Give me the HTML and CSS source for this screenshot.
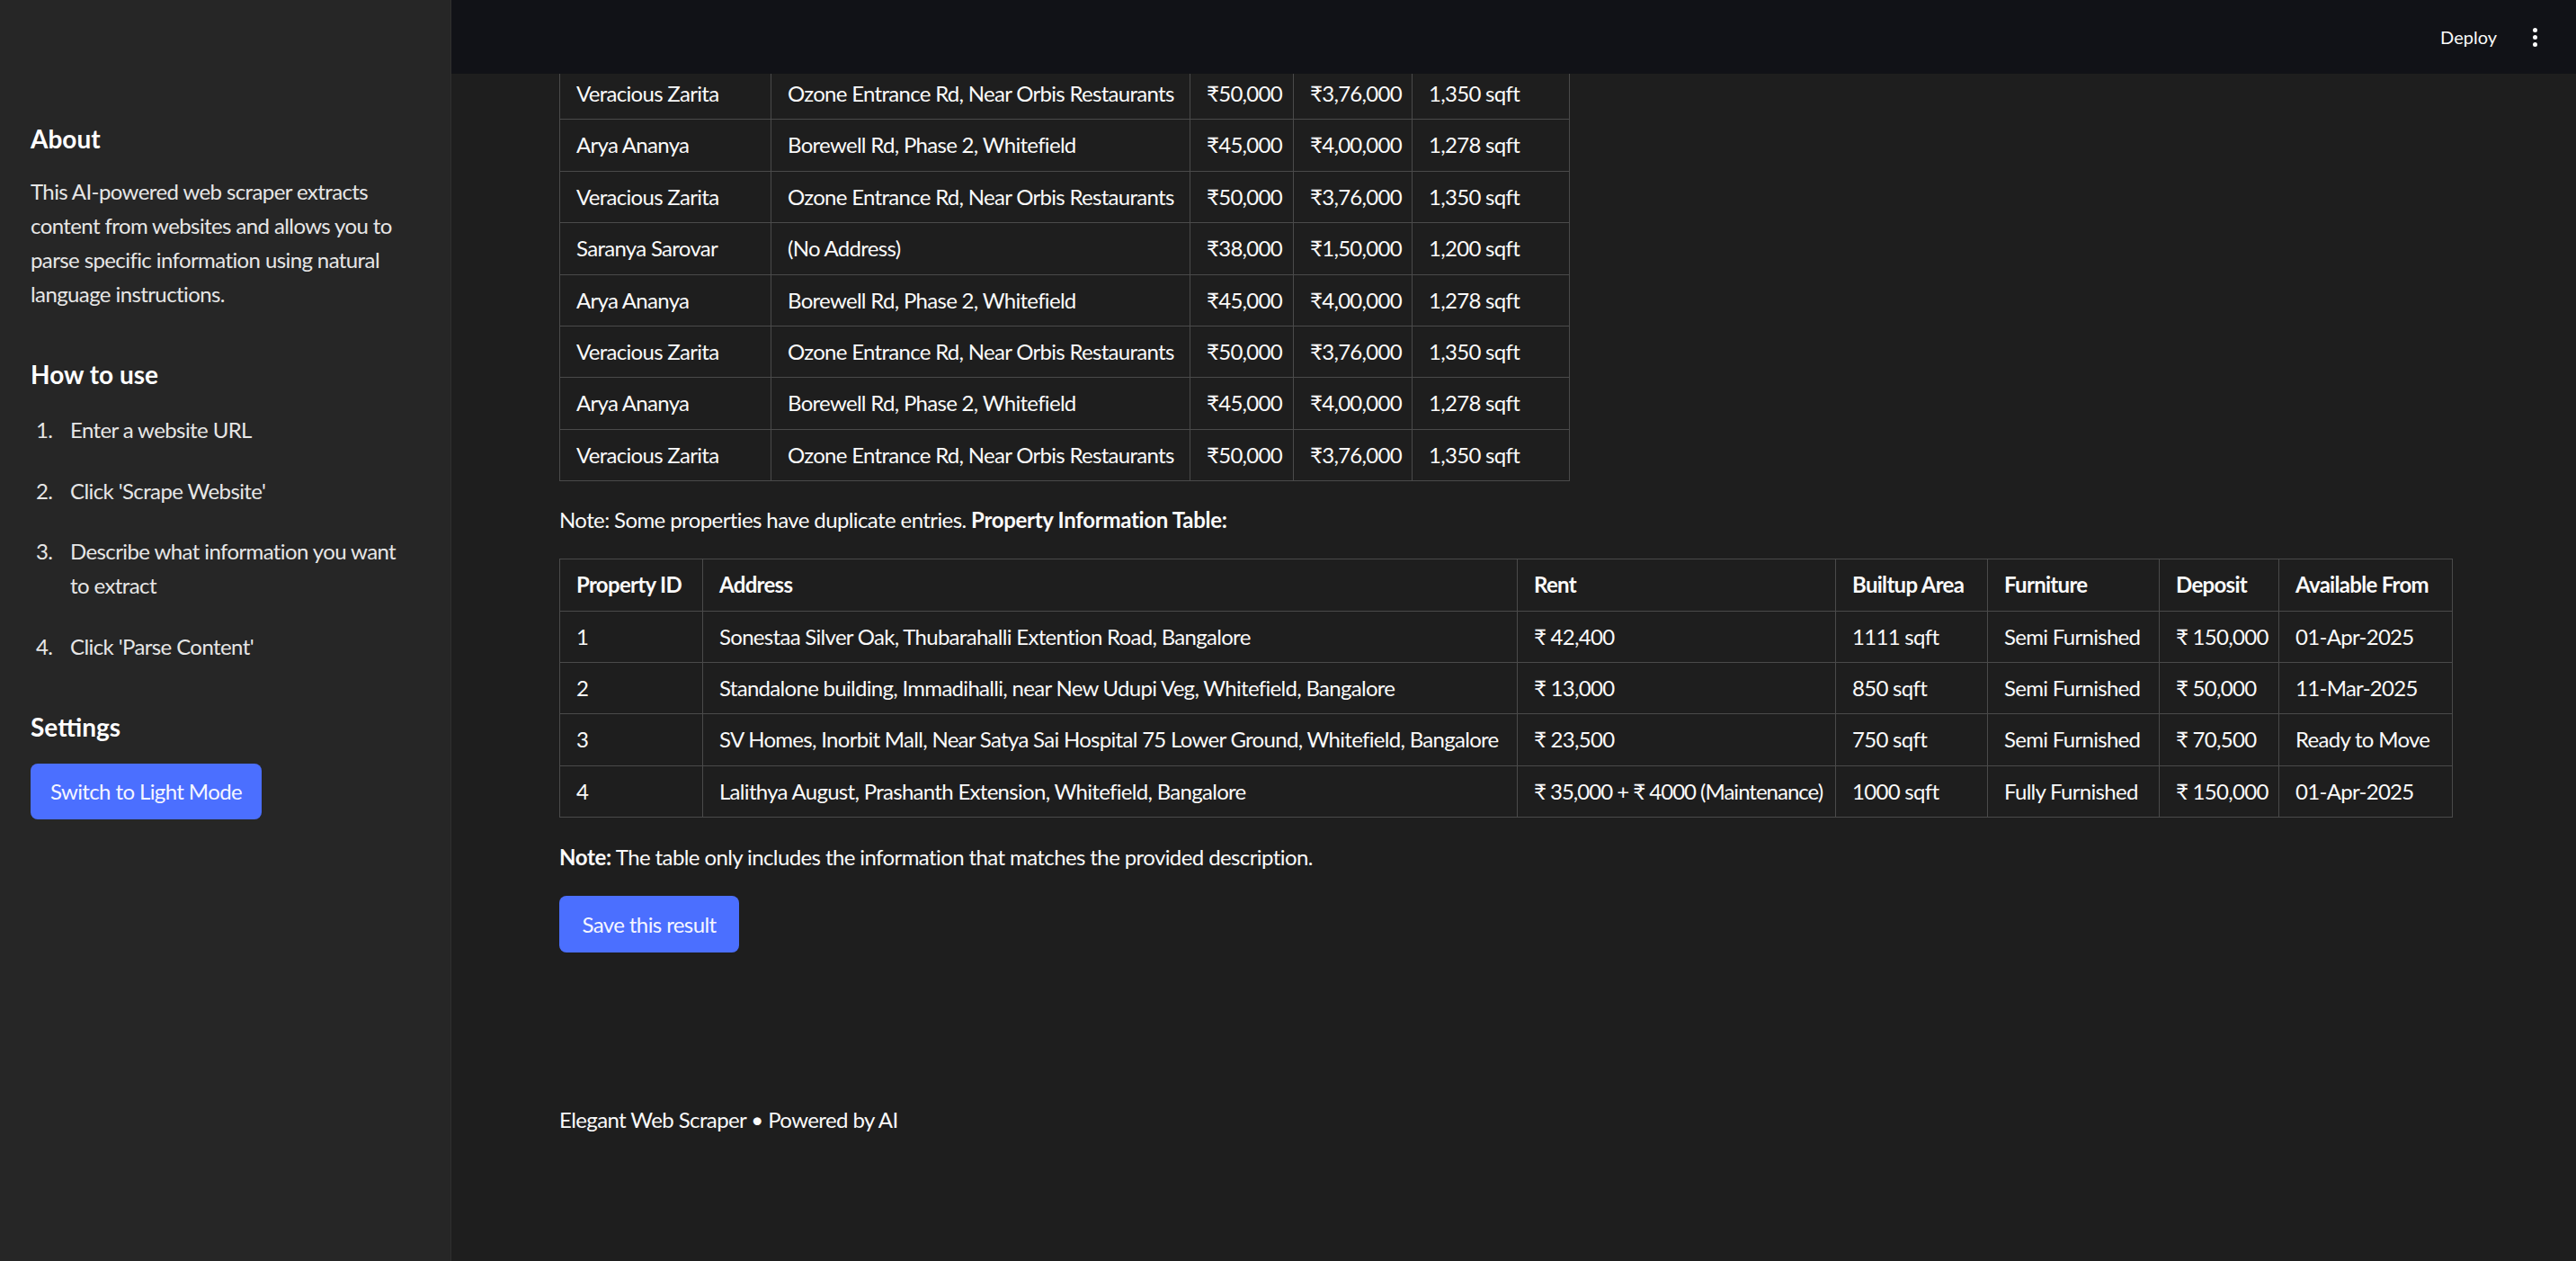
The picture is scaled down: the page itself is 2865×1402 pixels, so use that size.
FILE: index.html
```html
<!DOCTYPE html>
<html lang="en">
<head>
<meta charset="utf-8">
<title>Elegant Web Scraper</title>
<link rel="stylesheet" href="styles.css">
</head>
<body>
<div class="app">
  <aside class="sidebar">
    <h3 class="side-title">About</h3>
    <p class="side-text">This AI-powered web scraper extracts content from websites and allows you to parse specific information using natural language instructions.</p>
    <h3 class="side-title side-title-gap">How to use</h3>
    <ol class="steps">
      <li>Enter a website URL</li>
      <li>Click 'Scrape Website'</li>
      <li>Describe what information you want to extract</li>
      <li>Click 'Parse Content'</li>
    </ol>
    <h3 class="side-title side-title-gap">Settings</h3>
    <button class="btn side-btn">Switch to Light Mode</button>
  </aside>
  <main class="main">
    <header class="topbar">
      <span class="deploy">Deploy</span>
      <span class="kebab"><i></i><i></i><i></i></span>
    </header>
    <div class="content">
      <table class="grid grid-a">
        <colgroup>
          <col style="width:235px"><col style="width:466px"><col style="width:115px"><col style="width:132px"><col style="width:175px">
        </colgroup>
        <tbody>
          <tr><td>Veracious Zarita</td><td>Ozone Entrance Rd, Near Orbis Restaurants</td><td>₹50,000</td><td>₹3,76,000</td><td>1,350 sqft</td></tr>
          <tr><td>Arya Ananya</td><td>Borewell Rd, Phase 2, Whitefield</td><td>₹45,000</td><td>₹4,00,000</td><td>1,278 sqft</td></tr>
          <tr><td>Veracious Zarita</td><td>Ozone Entrance Rd, Near Orbis Restaurants</td><td>₹50,000</td><td>₹3,76,000</td><td>1,350 sqft</td></tr>
          <tr><td>Saranya Sarovar</td><td>(No Address)</td><td>₹38,000</td><td>₹1,50,000</td><td>1,200 sqft</td></tr>
          <tr><td>Arya Ananya</td><td>Borewell Rd, Phase 2, Whitefield</td><td>₹45,000</td><td>₹4,00,000</td><td>1,278 sqft</td></tr>
          <tr><td>Veracious Zarita</td><td>Ozone Entrance Rd, Near Orbis Restaurants</td><td>₹50,000</td><td>₹3,76,000</td><td>1,350 sqft</td></tr>
          <tr><td>Arya Ananya</td><td>Borewell Rd, Phase 2, Whitefield</td><td>₹45,000</td><td>₹4,00,000</td><td>1,278 sqft</td></tr>
          <tr><td>Veracious Zarita</td><td>Ozone Entrance Rd, Near Orbis Restaurants</td><td>₹50,000</td><td>₹3,76,000</td><td>1,350 sqft</td></tr>
        </tbody>
      </table>
      <p class="note">Note: Some properties have duplicate entries. <strong>Property Information Table:</strong></p>
      <table class="grid grid-b">
        <colgroup>
          <col style="width:159px"><col style="width:906px"><col style="width:354px"><col style="width:169px"><col style="width:191px"><col style="width:133px"><col style="width:193px">
        </colgroup>
        <thead>
          <tr><th>Property ID</th><th>Address</th><th>Rent</th><th>Builtup Area</th><th>Furniture</th><th>Deposit</th><th>Available From</th></tr>
        </thead>
        <tbody>
          <tr><td>1</td><td>Sonestaa Silver Oak, Thubarahalli Extention Road, Bangalore</td><td>₹ 42,400</td><td>1111 sqft</td><td>Semi Furnished</td><td>₹ 150,000</td><td>01-Apr-2025</td></tr>
          <tr><td>2</td><td>Standalone building, Immadihalli, near New Udupi Veg, Whitefield, Bangalore</td><td>₹ 13,000</td><td>850 sqft</td><td>Semi Furnished</td><td>₹ 50,000</td><td>11-Mar-2025</td></tr>
          <tr><td>3</td><td>SV Homes, Inorbit Mall, Near Satya Sai Hospital 75 Lower Ground, Whitefield, Bangalore</td><td>₹ 23,500</td><td>750 sqft</td><td>Semi Furnished</td><td>₹ 70,500</td><td>Ready to Move</td></tr>
          <tr><td>4</td><td>Lalithya August, Prashanth Extension, Whitefield, Bangalore</td><td class="tight">₹ 35,000 + ₹ 4000 (Maintenance)</td><td>1000 sqft</td><td>Fully Furnished</td><td>₹ 150,000</td><td>01-Apr-2025</td></tr>
        </tbody>
      </table>
      <p class="note note-b"><strong>Note:</strong> The table only includes the information that matches the provided description.</p>
      <button class="btn save-btn">Save this result</button>
      <p class="footer">Elegant Web Scraper • Powered by AI</p>
    </div>
  </main>
</div>
</body>
</html>
```
FILE: styles.css
```css
* { box-sizing: border-box; }
html, body {
  margin: 0;
  padding: 0;
  height: 100%;
}
body {
  background: #1e1e1e;
  color: #fafafa;
  font-family: Lato, "Noto Sans", sans-serif;
  font-size: 24px;
  line-height: 38px;
}
.app {
  display: flex;
  height: 100vh;
  overflow: hidden;
}
.sidebar {
  width: 502px;
  flex: 0 0 502px;
  background: #262626;
  border-right: 1px solid #2f2f2f;
  padding: 138px 34px 0 34px;
  letter-spacing: -0.6px;
}
.side-title {
  margin: 0;
  font-size: 28px;
  line-height: 32px;
  font-weight: 700;
  color: #ffffff;
  letter-spacing: 0;
}
.side-title-gap { margin-top: 54px; }
.side-text {
  margin: 24px 0 0 0;
  color: #e6e6e6;
}
.steps {
  margin: 27px 0 0 0;
  padding: 0 12px 0 6px;
  color: #e6e6e6;
  list-style: none;
  counter-reset: step;
}
.steps li {
  display: flex;
  margin: 0 0 29.5px 0;
  counter-increment: step;
}
.steps li::before {
  content: counter(step) ".";
  flex: 0 0 38px;
  width: 38px;
}
.steps li:last-child { margin-bottom: 0; }
.btn {
  display: inline-flex;
  align-items: center;
  justify-content: center;
  border: none;
  background: #4b6fff;
  color: #f5f6ff;
  font-family: Lato, "Noto Sans", sans-serif;
  font-size: 24px;
  border-radius: 8px;
  height: 62px;
  padding: 0 24px;
  letter-spacing: -0.6px;
}
.side-btn {
  margin-top: 25px;
  width: 257px;
  padding: 0;
}
.main {
  flex: 1;
  position: relative;
  overflow: hidden;
  letter-spacing: -0.6px;
}
.topbar {
  position: absolute;
  top: 0;
  left: 0;
  right: 0;
  height: 82px;
  background: #111217;
  display: flex;
  align-items: center;
  justify-content: flex-end;
  padding-right: 42px;
  gap: 40px;
  z-index: 2;
  letter-spacing: 0;
}
.deploy {
  font-size: 20px;
  color: #fafafa;
  line-height: 24px;
}
.kebab {
  display: flex;
  flex-direction: column;
  gap: 3px;
  width: 6px;
}
.kebab i {
  display: block;
  width: 5px;
  height: 5px;
  border-radius: 50%;
  background: #fafafa;
}
.content {
  padding: 75px 0 0 120px;
}
.grid {
  border-collapse: collapse;
  table-layout: fixed;
  letter-spacing: -0.7px;
}
.grid-a { width: 1123px; }
.grid-b { width: 2105px; }
.grid td, .grid th {
  border: 1px solid #4a4a4a;
  padding: 9px 18px;
  line-height: 38.4px;
  text-align: left;
  white-space: nowrap;
  overflow: hidden;
  font-weight: 400;
  color: #fafafa;
}
.grid th { font-weight: 700; }
.grid td.tight { letter-spacing: -1px; }
.note {
  margin: 24px 0 24px 0;
}
.note strong { letter-spacing: -0.3px; }
.note-b { margin: 25px 0 24px 0; }
.save-btn {
  width: 200px;
  height: 63px;
  padding: 0;
}
.footer {
  margin: 167px 0 0 0;
}
```
